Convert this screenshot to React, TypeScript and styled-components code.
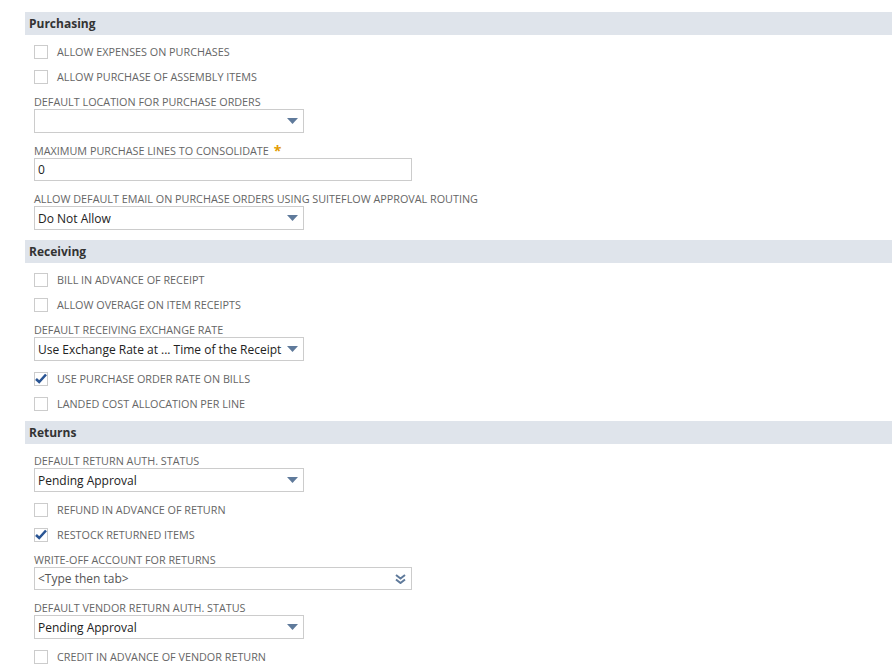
import React from 'react';
import styled, { createGlobalStyle } from 'styled-components';

const GlobalStyle = createGlobalStyle`
  body {
    margin: 0;
    background: #ffffff;
    font-family: "Open Sans", "Liberation Sans", Arial, sans-serif;
  }
`;

type Item =
  | { kind: 'check'; label: string; checked?: boolean }
  | { kind: 'select'; label: string; value: string }
  | { kind: 'input'; label: string; value: string; required?: boolean }
  | { kind: 'lookup'; label: string; placeholder: string };

interface SectionData {
  title: string;
  items: Item[];
}

const sections: SectionData[] = [
  {
    title: 'Purchasing',
    items: [
      { kind: 'check', label: 'Allow expenses on purchases' },
      { kind: 'check', label: 'Allow purchase of assembly items' },
      { kind: 'select', label: 'Default location for purchase orders', value: '' },
      { kind: 'input', label: 'Maximum purchase lines to consolidate', value: '0', required: true },
      {
        kind: 'select',
        label: 'Allow default email on purchase orders using suiteflow approval routing',
        value: 'Do Not Allow',
      },
    ],
  },
  {
    title: 'Receiving',
    items: [
      { kind: 'check', label: 'Bill in advance of receipt' },
      { kind: 'check', label: 'Allow overage on item receipts' },
      {
        kind: 'select',
        label: 'Default receiving exchange rate',
        value: 'Use Exchange Rate at ... Time of the Receipt',
      },
      { kind: 'check', label: 'Use purchase order rate on bills', checked: true },
      { kind: 'check', label: 'Landed cost allocation per line' },
    ],
  },
  {
    title: 'Returns',
    items: [
      { kind: 'select', label: 'Default return auth. status', value: 'Pending Approval' },
      { kind: 'check', label: 'Refund in advance of return' },
      { kind: 'check', label: 'Restock returned items', checked: true },
      { kind: 'lookup', label: 'Write-off account for returns', placeholder: '<Type then tab>' },
      { kind: 'select', label: 'Default vendor return auth. status', value: 'Pending Approval' },
      { kind: 'check', label: 'Credit in advance of vendor return' },
    ],
  },
];

const Page = styled.div`
  padding: 12px 0 0 25px;
`;

const Section = styled.section`
  margin-bottom: 5px;
`;

const SectionHeader = styled.h2`
  margin: 0;
  height: 23px;
  display: flex;
  align-items: center;
  padding-left: 4px;
  background: #dfe4eb;
  color: #333333;
  font-size: 12px;
  font-weight: 700;
`;

const SectionBody = styled.div`
  padding: 4px 0 0 9px;
`;

const CheckRow = styled.label`
  height: 25px;
  display: flex;
  align-items: center;
  gap: 9px;
`;

const Box = styled.span`
  box-sizing: border-box;
  width: 14px;
  height: 14px;
  border: 1px solid #cccccc;
  background: #ffffff;
  display: flex;
  align-items: center;
  justify-content: center;
  flex: none;
`;

const Caption = styled.span`
  font-size: 10.8px;
  line-height: 14px;
  color: #666666;
  text-transform: uppercase;
`;

const FieldGroup = styled.div`
  padding: 6px 0 5px;
`;

const FieldLabel = styled.div`
  font-size: 10.8px;
  line-height: 14px;
  color: #666666;
  text-transform: uppercase;
  display: flex;
  gap: 5px;
`;

const Star = styled.span`
  color: #e39b00;
  font-size: 14px;
  line-height: 14px;
  font-weight: 700;
`;

const Field = styled.div<{ $wide?: boolean }>`
  box-sizing: border-box;
  width: ${(p) => (p.$wide ? '378px' : '270px')};
  height: ${(p) => (p.$wide ? '23px' : '24px')};
  border: 1px solid #cccccc;
  background: #ffffff;
  display: flex;
  align-items: center;
  padding: 0 5px 0 3px;
`;

const Value = styled.span<{ $muted?: boolean }>`
  flex: 1;
  font-size: 12px;
  color: ${(p) => (p.$muted ? '#555555' : '#222222')};
  white-space: nowrap;
  overflow: hidden;
`;

const Check = () => (
  <svg width="12" height="11" viewBox="0 0 12 11">
    <path d="M1 6 L4.2 9 L11 1.5" fill="none" stroke="#2a5594" strokeWidth="2.6" />
  </svg>
);

const Arrow = () => (
  <svg width="11" height="6" viewBox="0 0 11 6">
    <path d="M0 0 H11 L5.5 6 Z" fill="#5f7a9b" />
  </svg>
);

const DoubleChevron = () => (
  <svg width="11" height="10" viewBox="0 0 11 10">
    <path d="M1 1 L5.5 4.5 L10 1" fill="none" stroke="#5f7a9b" strokeWidth="2" />
    <path d="M1 5.5 L5.5 9 L10 5.5" fill="none" stroke="#5f7a9b" strokeWidth="2" />
  </svg>
);

const renderItem = (item: Item, i: number) => {
  if (item.kind === 'check') {
    return (
      <CheckRow key={i}>
        <Box>{item.checked && <Check />}</Box>
        <Caption>{item.label}</Caption>
      </CheckRow>
    );
  }
  return (
    <FieldGroup key={i}>
      <FieldLabel>
        {item.label}
        {item.kind === 'input' && item.required && <Star>*</Star>}
      </FieldLabel>
      {item.kind === 'select' && (
        <Field>
          <Value>{item.value}</Value>
          <Arrow />
        </Field>
      )}
      {item.kind === 'input' && (
        <Field $wide>
          <Value>{item.value}</Value>
        </Field>
      )}
      {item.kind === 'lookup' && (
        <Field $wide>
          <Value $muted>{item.placeholder}</Value>
          <DoubleChevron />
        </Field>
      )}
    </FieldGroup>
  );
};

const App: React.FC = () => {
  return (
    <>
      <GlobalStyle />
      <Page>
        {sections.map((s) => (
          <Section key={s.title}>
            <SectionHeader>{s.title}</SectionHeader>
            <SectionBody>{s.items.map(renderItem)}</SectionBody>
          </Section>
        ))}
      </Page>
    </>
  );
};

export default App;
